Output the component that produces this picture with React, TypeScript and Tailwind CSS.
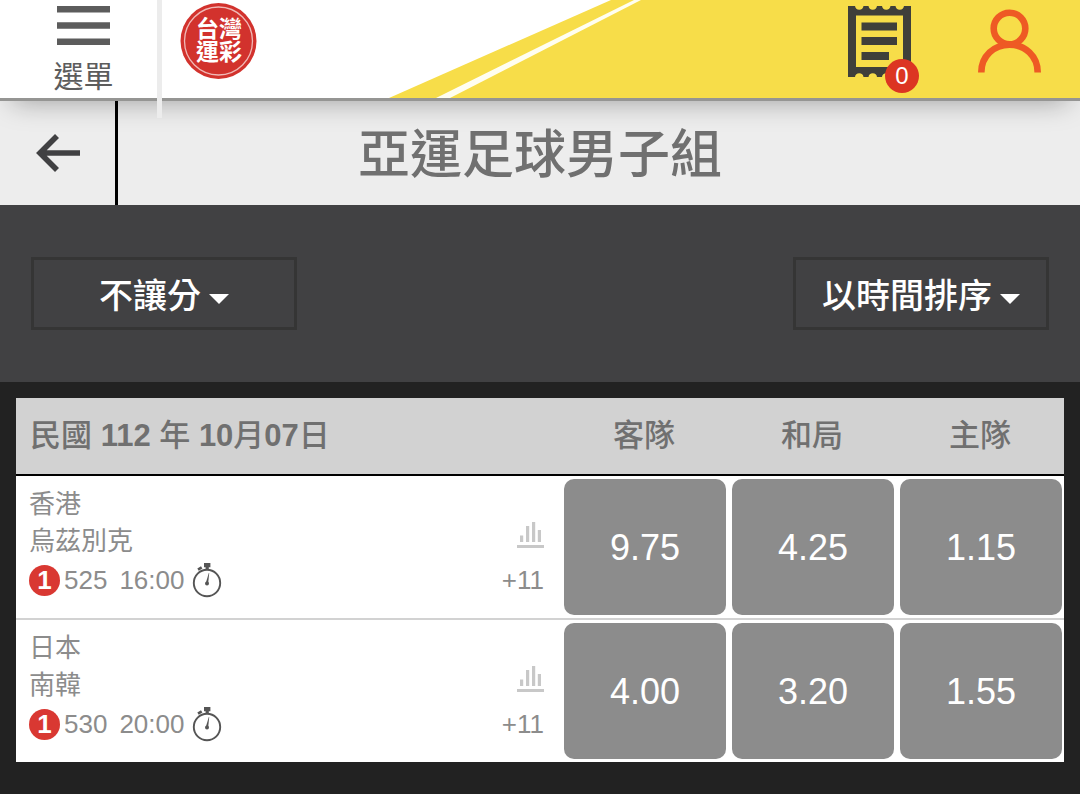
import { useState } from 'react';

type Match = {
  id: number;
  away: string;
  home: string;
  time: string;
  more: number;
  odds: string[];
};

const MATCHES: Match[] = [
  { id: 525, away: '香港', home: '烏茲別克', time: '16:00', more: 11, odds: ['9.75', '4.25', '1.15'] },
  { id: 530, away: '日本', home: '南韓', time: '20:00', more: 11, odds: ['4.00', '3.20', '1.55'] },
];

const OUTCOMES = ['客隊', '和局', '主隊'];

function Logo() {
  return (
    <div className="relative flex size-[78px] items-center justify-center">
      <svg className="absolute inset-0" width="78" height="78" viewBox="0 0 78 78" aria-hidden="true">
        <circle cx="38.500" cy="39" r="38" fill="#d2322d" />
        <circle cx="38.500" cy="39" r="34" fill="none" stroke="#f0b9b6" strokeWidth="1.300" />
      </svg>
      <span className="relative w-12 text-center text-[23px] leading-[23px] font-bold text-white">台灣運彩</span>
    </div>
  );
}

function ReceiptIcon() {
  return (
    <svg width="63" height="71" viewBox="0 0 63 71" aria-hidden="true">
      <path
        fill="#3f3f3a"
        fillRule="evenodd"
        d="M0 0H7A4.300 4.300 0 0 0 15.500 0H20.500A4.300 4.300 0 0 0 29 0H34A4.300 4.300 0 0 0 42.500 0H47.500A4.300 4.300 0 0 0 56 0H63V71H56A4.300 4.300 0 0 0 47.500 71H42.500A4.300 4.300 0 0 0 34 71H29A4.300 4.300 0 0 0 20.500 71H15.500A4.300 4.300 0 0 0 7 71H0ZM8 9.500V61H55V9.500Z"
      />
      <path fill="#3f3f3a" d="M13.500 16.500h35.500v8h-35.500zM13.500 31h35.500v8h-35.500zM13.500 46h27.500v8h-27.500z" />
    </svg>
  );
}

function UserIcon() {
  return (
    <svg width="63" height="64" viewBox="0 0 63 64" fill="none" stroke="#ee5a24" strokeWidth="6.600" aria-hidden="true">
      <circle cx="31.500" cy="19.500" r="15.800" />
      <path d="M3.300 63.500C3.300 47 16 35.800 31.500 35.800S59.700 47 59.700 63.500" />
    </svg>
  );
}

function StopwatchIcon() {
  return (
    <svg width="30" height="36" viewBox="0 0 30 36" aria-hidden="true">
      <circle cx="15" cy="21" r="13.200" fill="none" stroke="#555" strokeWidth="1.900" />
      <path fill="#555" d="M12 1h6.400v4.200h-1.600v2.600h-3.200V5.200H12z" />
      <path stroke="#555" strokeWidth="2.800" d="M6 7.600l3.700-2.200" />
      <path fill="#555" d="M13.800 21l3-10 .4.100-1 10z" />
      <circle cx="15" cy="21.500" r="2" fill="#555" />
    </svg>
  );
}

function StatsIcon() {
  return (
    <svg width="27" height="27" viewBox="0 0 27 27" fill="#c8c8c8" aria-hidden="true">
      <path d="M3 14.500h3.200v6.500H3zM9 5h3.200v16H9zM15 1h3.200v20H15zM20.800 9H24v12h-3.200zM0 24h27v3H0z" />
    </svg>
  );
}

function Filter({ label, value, className }: { label: string; value: string; className: string }) {
  const [selected, setSelected] = useState(value);

  return (
    <label className={`flex h-[73px] items-center justify-center gap-2 border-[3px] border-[#353535] pt-1 ${className}`}>
      <select
        aria-label={label}
        value={selected}
        onChange={(e) => setSelected(e.target.value)}
        className="field-sizing-content cursor-pointer appearance-none bg-transparent text-[34px] leading-[48px] font-medium text-white outline-none"
      >
        <option value={value}>{value}</option>
      </select>
      <svg width="20" height="10" viewBox="0 0 20 10" className="mt-1.5" aria-hidden="true">
        <path fill="#fff" d="M0 0h20L10 10z" />
      </svg>
    </label>
  );
}

export default function App() {
  return (
    <div className="w-full bg-white font-['Liberation_Sans','Noto_Sans_CJK_TC',sans-serif]">
      <header className="relative z-10 flex h-[101px] border-b-[3px] border-[#959593] bg-white shadow-[0_12px_28px_-12px_rgba(0,0,0,0.35)]">
        {/* yellow stripes behind the icons */}
        <svg className="absolute inset-0 h-full w-full" viewBox="0 0 1080 98" preserveAspectRatio="none" aria-hidden="true">
          <path fill="#f7dd49" d="M389 98L611 0H1080V98Z" />
          <path fill="#fffef0" d="M436 98L634 0H641L450 98Z" />
        </svg>

        <button type="button" className="relative flex w-[157px] flex-col items-center pt-1.5 pl-2.5 text-[#5c5c5c]">
          <svg width="53" height="39" viewBox="0 0 53 39" fill="currentColor" aria-hidden="true">
            <path d="M0 0h53v6.500H0zM0 16.300h53v6.500H0zM0 32.500h53V39H0z" />
          </svg>
          <span className="mt-3 text-[30px] leading-10">選單</span>
        </button>
        <div className="absolute top-0 left-[157px] h-[118px] w-[5px] bg-[#ececec]" />

        <div className="relative flex flex-1 items-center justify-between pr-[39px] pb-4 pl-[23px]">
          <a href="#">
            <Logo />
          </a>
          <div className="flex items-center gap-[67px]">
            <button type="button" aria-label="投注單" className="relative">
              <ReceiptIcon />
              <span className="absolute -right-2 -bottom-4 flex size-[34px] items-center justify-center rounded-full bg-[#dc3522] text-2xl text-white">
                0
              </span>
            </button>
            <button type="button" aria-label="會員">
              <UserIcon />
            </button>
          </div>
        </div>
      </header>

      <div className="grid h-[104px] grid-cols-[118px_1fr_118px] items-stretch bg-[#ededed]">
        <button type="button" aria-label="返回" className="flex items-center justify-center border-r-[3px] border-black">
          <svg width="44" height="38" viewBox="0 0 44 38" fill="none" stroke="#404042" strokeWidth="5.600" aria-hidden="true">
            <path d="M21 2L4 19L21 36M4 19H44" />
          </svg>
        </button>
        <h1 className="flex items-center justify-center pt-1 text-[52px] leading-none font-medium text-[#707070]">亞運足球男子組</h1>
      </div>

      <div className="flex h-[177px] items-start justify-between bg-[#414143] px-[31px] pt-[52px]">
        <Filter label="玩法" value="不讓分" className="w-[266px]" />
        <Filter label="排序" value="以時間排序" className="px-[26px]" />
      </div>

      <main className="bg-[#222] px-4 pt-4 pb-8">
        <table className="w-full table-fixed border-collapse bg-white">
          <thead>
            <tr className="h-[77px] border-b-2 border-black bg-[#d2d2d2] text-[31px] text-[#707070]">
              <th className="pl-3.5 text-left font-medium">
                民國 <b>112</b> 年 <b>10</b>月<b>07</b>日
              </th>
              {OUTCOMES.map((outcome) => (
                <th key={outcome} className="w-[168px] font-medium">
                  {outcome}
                </th>
              ))}
            </tr>
          </thead>
          <tbody>
            {MATCHES.map((match) => (
              <tr key={match.id} className="border-b-2 border-[#d2d2d2] last:border-b-0">
                <td className="pt-2.5 pr-4 pl-[13px] align-top">
                  <div className="flex items-end justify-between text-[26px] text-[#8c8c8c]">
                    <div>
                      <p className="leading-[37px]">{match.away}</p>
                      <p className="leading-[37px]">{match.home}</p>
                      <div className="flex h-10 items-center">
                        <span className="mr-1 flex size-[31px] items-center justify-center rounded-full bg-[#d93832] font-bold text-white">
                          1
                        </span>
                        <span className="mr-3">{match.id}</span>
                        <span className="mr-2">{match.time}</span>
                        <StopwatchIcon />
                      </div>
                    </div>
                    <div className="flex flex-col items-end gap-3">
                      <button type="button" aria-label="統計">
                        <StatsIcon />
                      </button>
                      <a href="#" className="leading-10">
                        +{match.more}
                      </a>
                    </div>
                  </div>
                </td>
                {match.odds.map((odd, idx) => (
                  <td key={idx} className="py-[3px] pr-0.5 pl-1">
                    <button type="button" className="block h-[136px] w-full rounded-[10px] bg-[#8c8c8c] pt-0.5 text-4xl text-white">
                      {odd}
                    </button>
                  </td>
                ))}
              </tr>
            ))}
          </tbody>
        </table>
      </main>
    </div>
  );
}
